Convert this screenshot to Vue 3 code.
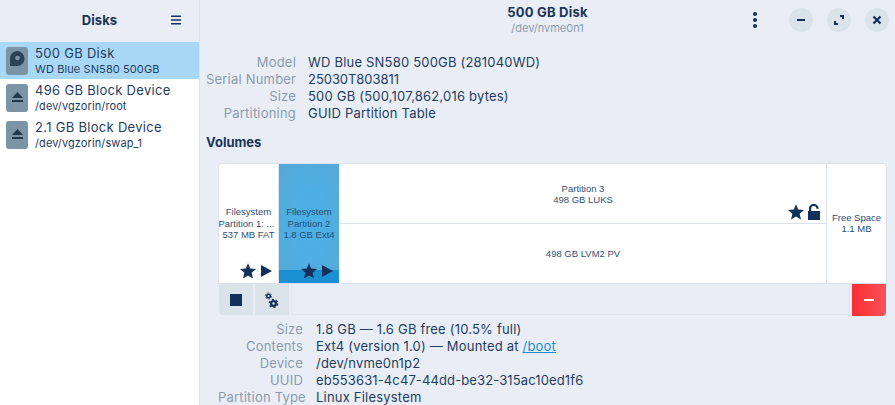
<script setup>
const disks = [
  { title: '500 GB Disk', sub: 'WD Blue SN580 500GB', kind: 'disk', active: true },
  { title: '496 GB Block Device', sub: '/dev/vgzorin/root', kind: 'eject' },
  { title: '2.1 GB Block Device', sub: '/dev/vgzorin/swap_1', kind: 'eject' },
]
const top = [
  { k: 'Model', v: 'WD Blue SN580 500GB (281040WD)' },
  { k: 'Serial Number', v: '25030T803811', cls: 'tight' },
  { k: 'Size', v: '500 GB (500,107,862,016 bytes)' },
  { k: 'Partitioning', v: 'GUID Partition Table' },
]
const star = 'M8 .2l2.2 5.4 5.8.4-4.4 3.8 1.4 5.7L8 12.4l-5 3.1 1.4-5.7L0 6l5.8-.4z'
</script>

<template>
  <div class="win">
    <aside class="side">
      <header class="side-head">
        <span class="side-title">Disks</span>
        <svg class="burger" width="12" height="12" viewBox="0 0 12 12"><path d="M1 1.5h10v1.6H1zM1 5.2h10v1.6H1zM1 8.9h10v1.6H1z" fill="#12315a"/></svg>
      </header>
      <ul class="list">
        <li v-for="d in disks" :key="d.title" class="row" :class="{ active: d.active }">
          <span class="dicon">
            <svg v-if="d.kind === 'disk'" width="22" height="28" viewBox="0 0 22 28">
              <path d="M11 4a7.5 7.5 0 0 1 7.5 7.5c0 4-3.2 7.5-7.5 7.5H4v-7.5A7.5 7.5 0 0 1 11 4z" fill="#2d4255"/>
              <circle cx="11.5" cy="11" r="2.3" fill="#7c95a6"/>
            </svg>
            <svg v-else width="22" height="28" viewBox="0 0 22 28">
              <path d="M11.5 8l5.5 6H6z" fill="#22384c"/><path d="M6 16h11v2H6z" fill="#22384c"/>
            </svg>
          </span>
          <span class="dtext">
            <span class="dt">{{ d.title }}</span>
            <span class="ds">{{ d.sub }}</span>
          </span>
        </li>
      </ul>
    </aside>
    <main class="main">
      <header class="head">
        <div class="head-title">
          <span class="ht">500 GB Disk</span>
          <span class="hs">/dev/nvme0n1</span>
        </div>
        <div class="controls">
          <svg class="kebab" width="6" height="16" viewBox="0 0 6 16"><circle cx="3" cy="2" r="2" fill="#12315a"/><circle cx="3" cy="8" r="2" fill="#12315a"/><circle cx="3" cy="14" r="2" fill="#12315a"/></svg>
          <span class="wbtn"><svg width="12" height="12" viewBox="0 0 12 12"><path d="M2 5h8v2H2z" fill="#12315a"/></svg></span>
          <span class="wbtn"><svg width="12" height="12" viewBox="0 0 12 12"><path d="M7 1h4v4H9V3H7zM1 7h2v2h2v2H1z" fill="#12315a"/></svg></span>
          <span class="wbtn"><svg width="12" height="12" viewBox="0 0 12 12"><path d="M2.5 2.5l7 7M9.5 2.5l-7 7" stroke="#12315a" stroke-width="2.2" fill="none"/></svg></span>
        </div>
      </header>
      <div class="info top">
        <template v-for="r in top" :key="r.k">
          <span class="k">{{ r.k }}</span><span class="v" :class="r.cls">{{ r.v }}</span>
        </template>
      </div>
      <h2 class="vol">Volumes</h2>
      <section class="panel">
        <div class="bar">
          <div class="seg s1">
            <span class="lbl">Filesystem<br><span class="nudge">Partition 1: ...</span><br>537 MB FAT</span>
            <span class="marks">
              <svg width="16" height="16" viewBox="0 0 16 16"><path :d="star" fill="#12315a"/></svg>
              <svg width="12" height="12" viewBox="0 0 12 12"><path d="M1 0l11 6L1 12z" fill="#12315a"/></svg>
            </span>
          </div>
          <div class="seg s2">
            <span class="lbl">Filesystem<br>Partition 2<br>1.8 GB Ext4</span>
            <span class="band"></span>
            <span class="marks">
              <svg width="16" height="16" viewBox="0 0 16 16"><path :d="star" fill="#12315a"/></svg>
              <svg width="12" height="12" viewBox="0 0 12 12"><path d="M1 0l11 6L1 12z" fill="#12315a"/></svg>
            </span>
          </div>
          <div class="seg s3">
            <div class="s3a">
              <span class="lbl">Partition 3<br>498 GB LUKS</span>
              <span class="marks">
                <svg width="16" height="16" viewBox="0 0 16 16"><path :d="star" fill="#12315a"/></svg>
                <svg width="12" height="16" viewBox="0 0 12 16"><path d="M0 7h12v9H0z" fill="#12315a"/><path d="M2.1 7.5V4.3a3.7 3.3 0 0 1 7.4 0v.5" stroke="#12315a" stroke-width="2.2" fill="none"/></svg>
              </span>
            </div>
            <div class="s3b"><span class="lbl">498 GB LVM2 PV</span></div>
          </div>
          <div class="seg s4"><span class="lbl">Free Space<br>1.1 MB</span></div>
        </div>
        <div class="tools">
          <span class="tool first"><svg width="12" height="12" viewBox="0 0 12 12"><path d="M0 0h12v12H0z" fill="#12315a"/></svg></span>
          <span class="tool"><svg width="14" height="16" viewBox="0 0 14 16">
            <circle cx="3.5" cy="4" r="1.8" fill="none" stroke="#12315a" stroke-width="1.5"/>
            <circle cx="3.5" cy="4" r="3" fill="none" stroke="#12315a" stroke-width="1" stroke-dasharray="1.57 1.57"/>
            <circle cx="8.5" cy="11.5" r="2.4" fill="none" stroke="#12315a" stroke-width="2.2"/>
            <circle cx="8.5" cy="11.5" r="4.1" fill="none" stroke="#12315a" stroke-width="1.4" stroke-dasharray="2.15 2.15"/>
          </svg></span>
          <span class="spacer"></span>
          <span class="del"><svg width="12" height="12" viewBox="0 0 12 12"><path d="M1 5h10v2H1z" fill="#fff"/></svg></span>
        </div>
      </section>
      <div class="info bottom">
        <span class="k">Size</span><span class="v">1.8 GB — 1.6 GB free (10.5% full)</span>
        <span class="k">Contents</span><span class="v">Ext4 (version 1.0) — Mounted at <a class="lnk">/boot</a></span>
        <span class="k">Device</span><span class="v">/dev/nvme0n1p2</span>
        <span class="k">UUID</span><span class="v uuid">eb553631-4c47-44dd-be32-315ac10ed1f6</span>
        <span class="k">Partition Type</span><span class="v">Linux Filesystem</span>
      </div>
    </main>
  </div>
</template>

<style>
html, body { margin: 0; overflow: hidden; background: #e9eef6; }
</style>

<style scoped>
.win { display: flex; width: 895px; height: 405px; overflow: hidden; font-family: Inter, "Noto Sans", sans-serif; color: #1c3a5e; background: #e9eef6; }
.side { width: 199px; flex: none; border-right: 1px solid #dbe2ec; display: flex; flex-direction: column; background: #fff; }
.side-head { height: 42px; flex: none; background: #e9eef6; display: flex; align-items: center; justify-content: center; position: relative; }
.side-title { font-size: 13px; font-weight: 700; letter-spacing: .1px; color: #1b3557; margin-top: -3px; }
.burger { position: absolute; left: 170px; top: 14px; }
.list { list-style: none; margin: 0; padding: 0; }
.row { height: 37px; display: flex; align-items: center; gap: 7px; padding-left: 6px; }
.row.active { background: #a9d8f7; }
.dicon { width: 22px; height: 28px; flex: none; background: #7c95a6; border-radius: 3px; display: block; }
.dicon svg { display: block; }
.dtext { display: flex; flex-direction: column; }
.dt { font-size: 13px; line-height: 18px; letter-spacing: .3px; color: #1f3d60; }
.ds { font-size: 11px; line-height: 15px; letter-spacing: .1px; color: #1f3d60; }
.main { flex: 1; min-width: 0; position: relative; }
.head { height: 42px; position: relative; text-align: center; }
.head-title { display: flex; flex-direction: column; align-items: center; padding-top: 4px; }
.ht { font-size: 13px; font-weight: 700; line-height: 17px; letter-spacing: .2px; color: #1b3557; }
.hs { font-size: 11px; line-height: 14px; color: #8b9bae; }
.controls { position: absolute; right: 6px; top: 8px; display: flex; align-items: center; gap: 14px; }
.kebab { margin-right: 17px; }
.wbtn { width: 24px; height: 24px; border-radius: 50%; background: #dbe3ea; display: flex; align-items: center; justify-content: center; }
.info { display: grid; font-size: 13px; line-height: 17px; letter-spacing: .2px; white-space: nowrap; }
.k { text-align: right; color: #8b9bae; }
.v { color: #1f3d60; }
.tight { letter-spacing: -.05px; }
.uuid { letter-spacing: .12px; }
.top { grid-template-columns: 90px auto; column-gap: 12px; padding: 12px 0 0 6px; justify-content: start; }
.vol { margin: 12px 0 12px 6px; font-size: 13px; line-height: 17px; font-weight: 700; color: #1b3557; }
.panel { margin: 0 8px 0 18px; }
.bar { height: 119px; display: flex; background: #fff; border: 1px solid #dbe2ec; border-radius: 4px 4px 0 0; font-family: "Liberation Sans", Arial, sans-serif; overflow: hidden; }
.seg { position: relative; display: flex; align-items: center; justify-content: center; text-align: center; box-sizing: border-box; border-right: 1px solid #dbe2ec; }
.lbl { font-size: 9.5px; line-height: 11.5px; color: #33506f; position: relative; white-space: nowrap; }
.nudge { position: relative; left: -2px; }
.s1 { width: 60px; }
.s2 { width: 61px; background: radial-gradient(ellipse at center, #49b1ea, #57a9d8); border-right: 1px solid #fff; }
.s2 .lbl { color: #27506f; }
.band { position: absolute; left: 0; right: 0; bottom: 0; height: 13px; background: #1a8fd1; }
.s3 { flex: 1; display: flex; flex-direction: column; align-items: stretch; }
.s3a { height: 59px; flex: none; position: relative; display: flex; justify-content: center; align-items: center; border-bottom: 1px solid #dbe2ec; }
.s3a .lbl { line-height: 11px; }
.s3b { flex: 1; display: flex; align-items: center; justify-content: center; }
.s4 { width: 59px; border-right: 0; }
.s4 .lbl { color: #284c7a; line-height: 11px; top: -1px; }
.marks { position: absolute; right: 6px; bottom: 4px; display: flex; align-items: center; gap: 4px; }
.s3a .marks { right: 6px; bottom: 3px; }
.tools { display: flex; height: 32px; gap: 2px; }
.tool { width: 34px; height: 31px; background: #dbe3ea; display: flex; align-items: center; justify-content: center; }
.first { border-bottom-left-radius: 4px; margin-left: 1px; }
.spacer { flex: 1; height: 31px; border: 1px solid #dfe5ee; border-top: 0; box-sizing: border-box; }
.del { width: 34px; height: 32px; background: linear-gradient(90deg, #fb2d32, #f7525a); border-bottom-right-radius: 4px; display: flex; align-items: center; justify-content: center; margin-right: 1px; }
.bottom { grid-template-columns: 85px auto; column-gap: 13px; padding: 5px 0 0 18px; justify-content: start; }
.lnk { color: #1a8fd1; text-decoration: underline; }
</style>
